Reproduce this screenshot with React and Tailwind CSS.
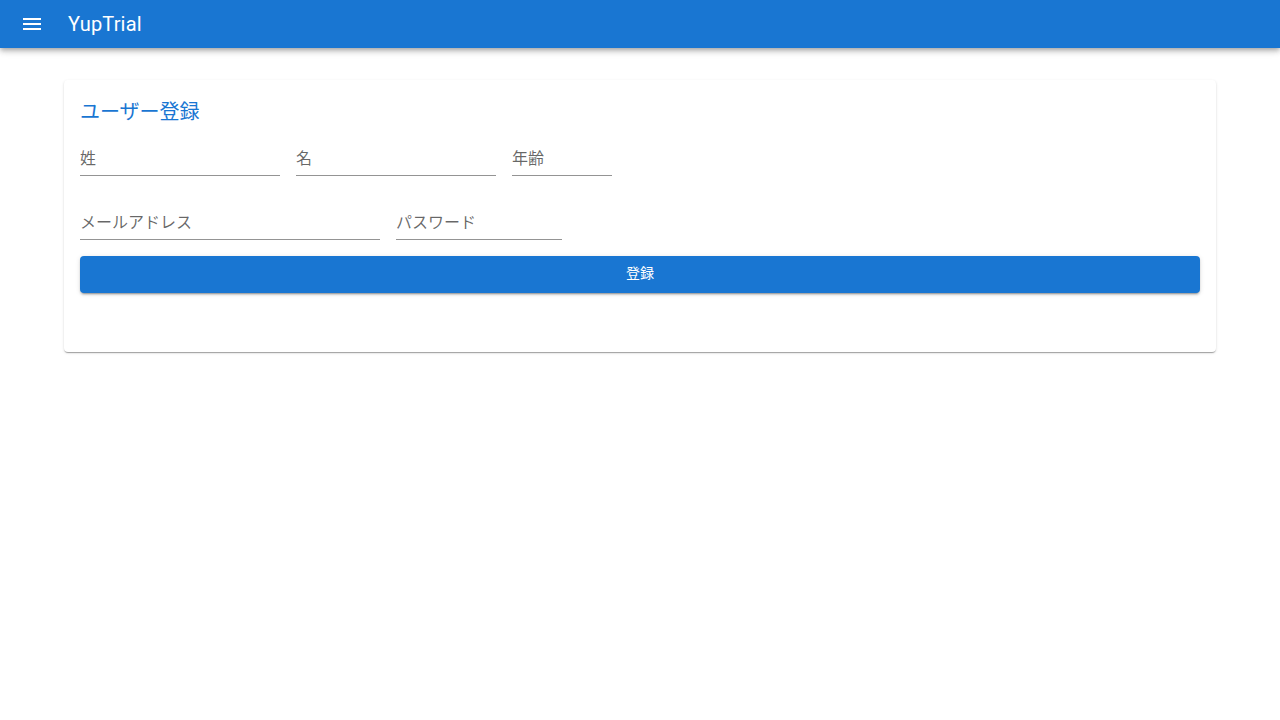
const font = { fontFamily: "Roboto, 'Noto Sans CJK JP', sans-serif" };

function Field({ label, width }) {
  return (
    <div className="flex flex-col pt-4" style={{ width }}>
      <div className="h-8 flex items-end pb-[5px] border-b border-[#949494] text-base text-black/60 leading-[23px]">
        {label}
      </div>
    </div>
  );
}

export default function App() {
  return (
    <div className="min-h-[720px] bg-white" style={font}>
      <header className="h-12 bg-[#1976d2] text-white flex items-center pl-5 shadow-[0px_2px_4px_-1px_rgba(0,0,0,0.2),0px_4px_5px_0px_rgba(0,0,0,0.14),0px_1px_10px_0px_rgba(0,0,0,0.12)] relative z-10">
        <svg width="24" height="24" viewBox="0 0 24 24" fill="currentColor" aria-hidden="true">
          <path d="M3 18h18v-2H3zm0-5h18v-2H3zm0-7v2h18V6z" />
        </svg>
        <span className="ml-6 text-[20px] leading-8 tracking-[0.15px]">YupTrial</span>
      </header>
      <main className="px-16 pt-8">
        <div className="rounded bg-white p-4 pb-[59px] shadow-[0px_2px_1px_-1px_rgba(0,0,0,0.2),0px_1px_1px_0px_rgba(0,0,0,0.14),0px_1px_3px_0px_rgba(0,0,0,0.12)]">
          <h2 className="text-[20px] leading-8 text-[#1976d2]">ユーザー登録</h2>
          <div className="flex gap-4">
            <Field label="姓" width={200} />
            <Field label="名" width={200} />
            <Field label="年齢" width={100} />
          </div>
          <div className="flex gap-4 mt-4">
            <Field label="メールアドレス" width={300} />
            <Field label="パスワード" width={166} />
          </div>
          <button className="mt-4 w-full h-[37px] pb-[3px] rounded bg-[#1976d2] text-white text-sm font-normal shadow-[0px_3px_1px_-2px_rgba(0,0,0,0.2),0px_2px_2px_0px_rgba(0,0,0,0.14),0px_1px_5px_0px_rgba(0,0,0,0.12)]">
            登録
          </button>
        </div>
      </main>
    </div>
  );
}
